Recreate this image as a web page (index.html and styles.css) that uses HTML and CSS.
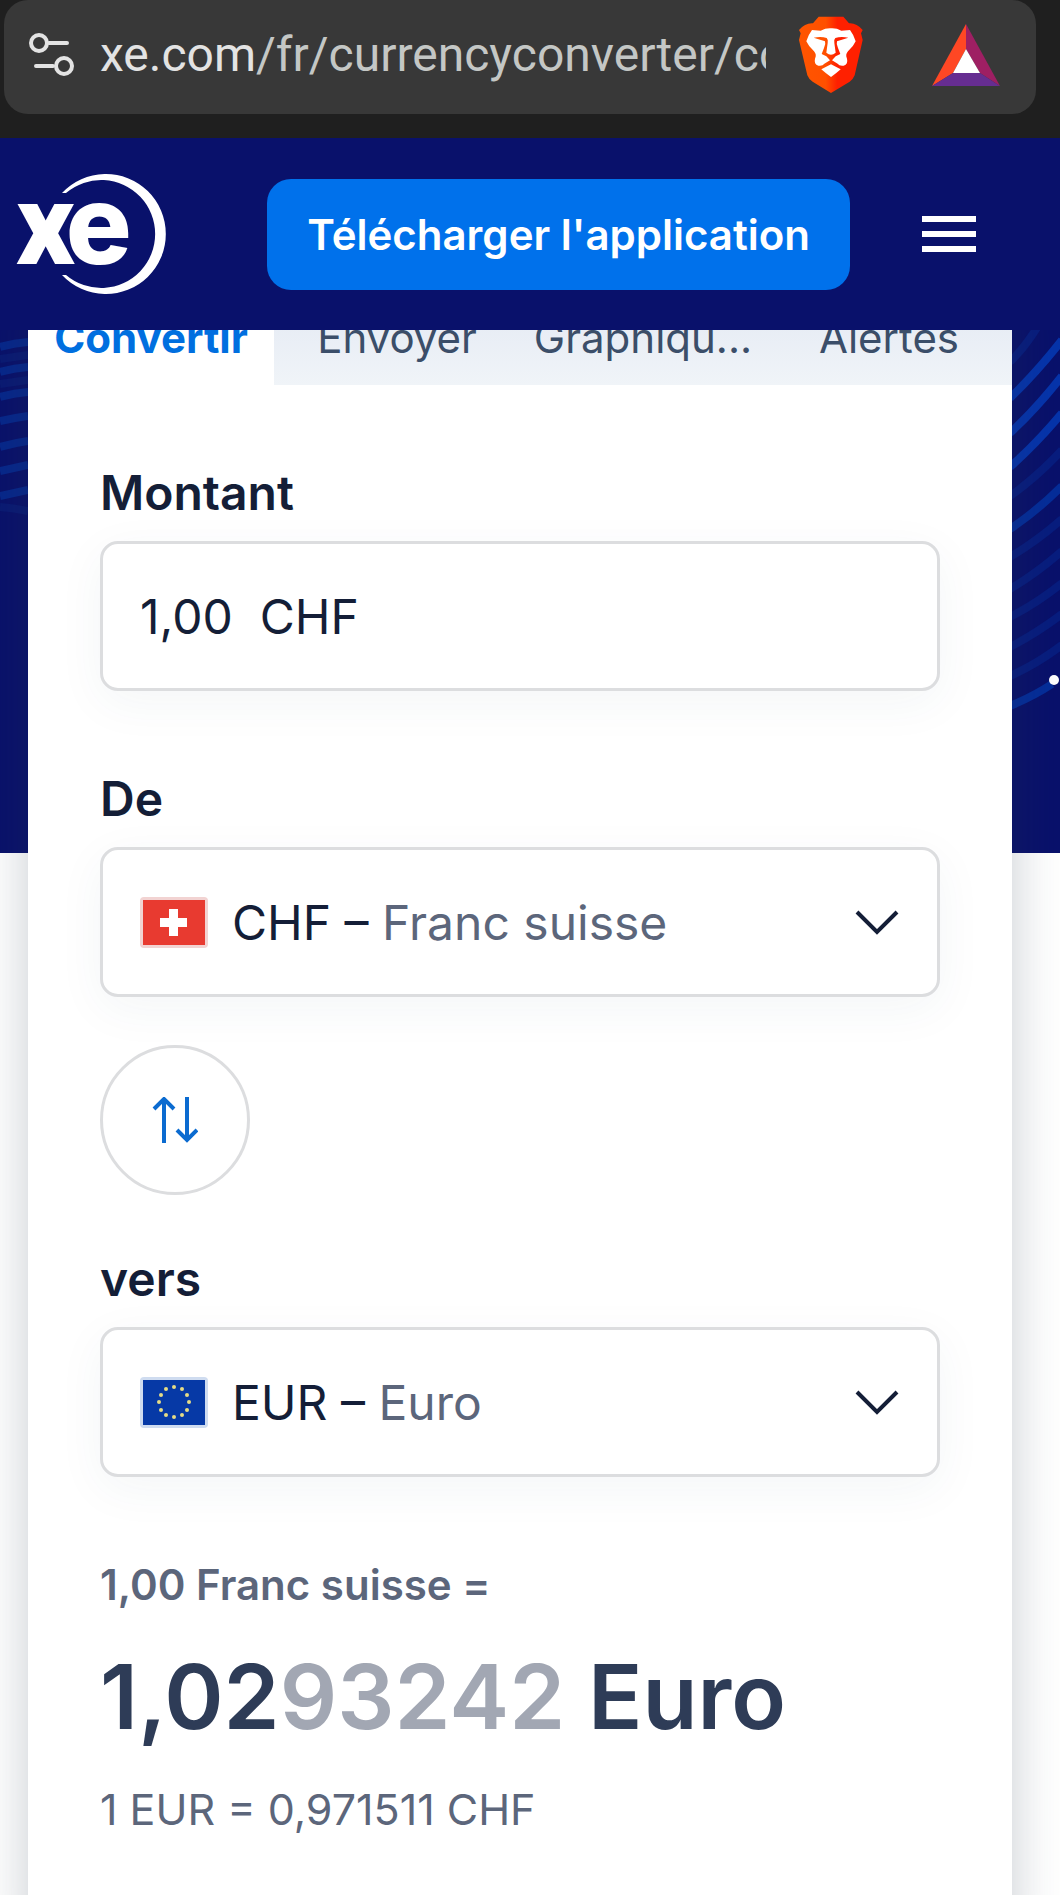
FILE: index.html
```html
<!DOCTYPE html>
<html lang="fr">
<head>
<meta charset="utf-8">
<meta name="viewport" content="width=device-width, initial-scale=1">
<title>Convertisseur de devises Xe</title>
<link rel="stylesheet" href="styles.css">
</head>
<body>
<div class="browser-bar">
  <div class="address">
    <svg class="address-icon" width="48" height="46" viewBox="0 0 48 46" fill="none" stroke="#e3e3e3" stroke-width="4" stroke-linecap="round" aria-hidden="true">
      <circle cx="11" cy="11" r="8"/><path d="M21 11H39M8 34H25"/><circle cx="36" cy="34" r="8"/>
    </svg>
    <div class="url"><span class="url-host">xe.com</span>/fr/currencyconverter/convert</div>
    <button class="shield" type="button" aria-label="Brave Shields">
      <svg width="66" height="78" viewBox="24 16 198 234" aria-hidden="true">
        <defs><linearGradient id="mane"><stop offset="0" stop-color="#ff5500"/><stop offset=".42" stop-color="#ff5000"/><stop offset=".6" stop-color="#ff2000"/><stop offset="1" stop-color="#ff2000"/></linearGradient></defs>
        <path fill="url(#mane)" d="M86 18H160L177 38Q199 36 218 58L213 68L218 88L194 194Q190 205 179 213L123 247L68 213Q56 205 52 194L27 88L32 68L27 58Q46 36 69 38Z"/>
        <path fill="#fff" d="M66 58L92 60Q107 52 123 53Q140 52 154 60L180 58Q191 72 197 92Q190 108 174 122Q165 132 171 144Q175 160 161 165Q148 167 143 159L126 149L137 137L151 130L144 112Q138 100 141 92L175 81Q152 77 136 82Q131 86 133 97L137 126Q130 132 123 132Q116 132 109 126L113 97Q115 86 110 82Q94 77 71 81L105 92Q108 100 102 112L95 130L109 137L120 149L103 159Q98 167 85 165Q71 160 75 144Q81 132 72 122Q56 108 49 92Q55 72 66 58Z"/>
        <path fill="#fff" d="M123 161L152 176Q139 188 123 199Q107 188 94 176Z"/>
      </svg>
    </button>
    <button class="rewards" type="button" aria-label="Brave Rewards">
      <svg width="68" height="62" viewBox="0 0 68 62" aria-hidden="true">
        <path fill="#ff4724" d="M34 0V25L21 49L0 62Z"/><path fill="#9e1f63" d="M34 0L68 62L48 49L34 25Z"/><path fill="#662d91" d="M0 62L21 49H48L68 62Z"/><path fill="#fff" d="M34 25L48 49H21Z"/>
      </svg>
    </button>
  </div>
</div>

<header class="site-header">
  <a class="logo" href="#" aria-label="Xe">
    <svg width="152" height="122" viewBox="0 0 152 122" aria-hidden="true">
      <path fill="#fff" d="M46 20A60 60 0 1 1 46 102H50A54 54 0 1 0 50 20Z"/>
      <text class="logo-text" x="0" y="91">x<tspan class="logo-round" dx="-9">e</tspan></text>
    </svg>
  </a>
  <button class="download" type="button">Télécharger l'application</button>
  <button class="menu" type="button" aria-label="Menu">
    <svg width="54" height="36" viewBox="0 0 54 36" fill="#fff" aria-hidden="true"><path d="M0 0H54V6H0ZM0 15H54V21H0ZM0 30H54V36H0Z"/></svg>
  </button>
</header>

<main class="page">
  <div class="hero" aria-hidden="true">
    <svg width="28" height="523" viewBox="0 0 28 523" fill="none" stroke="#07278b" stroke-width="8">
      <path d="M0 17Q14 13 28 12M0 42Q14 38 28 37M0 67Q14 63 28 62M0 91Q14 88 28 86M0 117Q14 113 28 111M0 141Q14 138 28 135M0 166Q14 163 28 160"/>
      <path stroke="#0a1a74" d="M0 177Q14 178 28 181M0 29L28 25M0 54L28 50"/>
    </svg>
    <svg width="48" height="523" viewBox="0 0 48 523" fill="none" stroke="#0634ab" stroke-width="8">
      <path d="M-2 68Q25 42 50 10M-2 103Q25 78 50 46M-2 137Q25 113 50 83"/>
      <path stroke="#052d99" d="M-2 199Q25 181 50 156M-2 376Q22 366 40 354"/>
      <path stroke="#081d7e" d="M-2 32Q14 16 26 -4M-2 166Q25 147 50 120M-2 227Q25 211 50 189M-2 259Q25 243 50 221M-2 287Q25 273 50 253M-2 317Q25 303 50 284M-2 346Q25 334 50 315"/>
      <circle cx="42" cy="350" r="5" fill="#fff" stroke="none"/>
    </svg>
  </div>

  <section class="card">
    <nav class="tabs">
      <a class="tab tab-active" href="#" aria-current="page">Convertir</a>
      <a class="tab" href="#">Envoyer</a>
      <a class="tab" href="#">Graphiqu...</a>
      <a class="tab" href="#">Alertes</a>
    </nav>
    <form class="converter">
      <div class="field">
        <label for="amount">Montant</label>
        <input class="box" id="amount" type="text" value="1,00&nbsp; CHF">
      </div>
      <div class="field">
        <label for="from">De</label>
        <div class="box picker">
          <svg class="flag" width="68" height="51" viewBox="0 0 68 51" aria-hidden="true">
            <rect width="68" height="51" rx="4" fill="#f2d3d2"/><rect x="3" y="3" width="62" height="45" fill="#e83a30"/><path fill="#fff" d="M29 12h9v9h9v9h-9v9h-9v-9h-9v-9h9z"/>
          </svg>
          <span class="currency">CHF – <span class="currency-name">Franc suisse</span></span>
          <svg class="chevron" width="44" height="26" viewBox="0 0 44 26" fill="none" stroke="#141e37" stroke-width="4" aria-hidden="true"><path d="M2 3L22 23L42 3"/></svg>
          <select id="from"><option>CHF – Franc suisse</option><option>EUR – Euro</option></select>
        </div>
      </div>
      <button class="swap" type="button" aria-label="Inverser les devises">
        <svg width="46" height="46" viewBox="0 0 46 46" fill="none" stroke="#0b6bd0" stroke-width="4" aria-hidden="true"><path d="M12 46V3M2 12L12 2L22 12M35 0V43M25 33L35 43L45 33"/></svg>
      </button>
      <div class="field">
        <label for="to">vers</label>
        <div class="box picker">
          <svg class="flag" width="68" height="51" viewBox="0 0 68 51" aria-hidden="true">
            <rect width="68" height="51" rx="4" fill="#cfdcf0"/><rect x="3" y="3" width="62" height="45" fill="#0639a6"/>
            <g fill="#e6dc86"><circle cx="34" cy="10" r="2"/><circle cx="42" cy="12" r="2"/><circle cx="47" cy="18" r="2"/><circle cx="49" cy="25" r="2"/><circle cx="47" cy="33" r="2"/><circle cx="42" cy="38" r="2"/><circle cx="34" cy="40" r="2"/><circle cx="26" cy="38" r="2"/><circle cx="21" cy="33" r="2"/><circle cx="19" cy="25" r="2"/><circle cx="21" cy="18" r="2"/><circle cx="26" cy="12" r="2"/></g>
          </svg>
          <span class="currency">EUR – <span class="currency-name">Euro</span></span>
          <svg class="chevron" width="44" height="26" viewBox="0 0 44 26" fill="none" stroke="#141e37" stroke-width="4" aria-hidden="true"><path d="M2 3L22 23L42 3"/></svg>
          <select id="to"><option>EUR – Euro</option><option>CHF – Franc suisse</option></select>
        </div>
      </div>
      <div class="result">
        <p class="result-from">1,00 Franc suisse =</p>
        <p class="result-value">1,02<span class="faded">93242</span> Euro</p>
        <p class="result-inverse">1 EUR = 0,971511 CHF</p>
      </div>
    </form>
  </section>
</main>
</body>
</html>
```
FILE: styles.css
```css
* { box-sizing: border-box; }

body {
  margin: 0;
  min-height: 100vh;
  display: flex;
  flex-direction: column;
  background: #fff;
  color: #141e37;
  font-family: Inter, "Liberation Sans", sans-serif;
}

button {
  margin: 0;
  padding: 0;
  border: 0;
  background: none;
  font: inherit;
  cursor: pointer;
}

svg { display: block; flex: none; }

/* Browser address bar */
.browser-bar {
  padding: 0 24px 24px 4px;
  background: #1f1f1f;
}

.address {
  display: flex;
  align-items: center;
  height: 114px;
  padding: 0 36px 4px 24px;
  border-radius: 24px;
  background: #383838;
}

.url {
  flex: 1;
  margin-left: 24px;
  overflow: hidden;
  white-space: nowrap;
  color: #c4c7c5;
  font: 400 48px/60px Roboto, sans-serif;
}

.url-host { color: #e3e3e3; }
.shield { margin-left: 32px; }
.rewards { margin-left: 68px; }

/* Site header */
.site-header {
  position: relative;
  z-index: 2;
  display: flex;
  align-items: center;
  height: 192px;
  padding: 0 84px 0 16px;
  background: #09116b;
}

.logo svg { overflow: visible; }

.logo-text {
  fill: #fff;
  font: 900 114px Roboto, sans-serif;
}

.logo-round { font: 800 110px Inter, sans-serif; }

.download {
  height: 111px;
  margin: 0 72px 0 auto;
  padding: 0 40px;
  border-radius: 24px;
  background: #0071eb;
  color: #fff;
  font-size: 42px;
  font-weight: 600;
  white-space: nowrap;
}

/* Hero background, with the card laid over it in the same cell */
.page {
  flex: 1;
  display: grid;
  overflow: clip;
}

.hero {
  grid-area: 1 / 1;
  display: flex;
  justify-content: space-between;
  height: 523px;
  background: #09116b;
}

.card {
  grid-area: 1 / 1;
  position: relative;
  margin: -40px 48px -48px 28px;
  background: #fff;
  box-shadow: 0 0 48px rgba(40, 55, 75, 0.26);
}

.tabs {
  display: grid;
  grid-template-columns: repeat(4, 1fr);
  height: 95px;
  background: linear-gradient(#e8edf5 40%, #f0f4f8);
}

.tab {
  display: flex;
  align-items: center;
  justify-content: center;
  color: #3b4e69;
  font-size: 42px;
  text-decoration: none;
}

.tab-active {
  background: #fff;
  color: #006fdf;
  font-weight: 700;
}

.converter { padding: 78px 72px 48px; }

.field { margin-bottom: 78px; }

label {
  display: block;
  margin-bottom: 18px;
  font-size: 48px;
  font-weight: 600;
  line-height: 60px;
}

.box {
  display: flex;
  align-items: center;
  width: 100%;
  height: 150px;
  padding: 0 38px 0 37px;
  border: 3px solid #dcdddf;
  border-radius: 18px;
  background: #fff;
  box-shadow: 0 12px 48px rgba(40, 70, 90, 0.05);
  color: #141e37;
  font-family: inherit;
  font-size: 48px;
}

.picker { position: relative; }
.currency { flex: 1; margin-left: 24px; }
.currency-name { color: #5c667b; }

/* The native list sits invisibly over the styled value */
.picker select {
  position: absolute;
  inset: 0;
  width: 100%;
  opacity: 0;
  font-size: 48px;
}

.swap {
  display: grid;
  place-items: center;
  width: 150px;
  height: 150px;
  margin: -30px 0 54px;
  border: 3px solid #dcdddf;
  border-radius: 50%;
  background: #fff;
}

.result p { margin: 0; color: #5c667b; }

.result .result-from {
  font-size: 42px;
  font-weight: 600;
  line-height: 60px;
}

.result .result-value {
  margin: 28px 0;
  color: #2e3c57;
  font-size: 90px;
  font-weight: 600;
  line-height: 108px;
}

.result .faded { color: #a2a7b3; }

.result .result-inverse {
  font-size: 43px;
  line-height: 60px;
}
```
